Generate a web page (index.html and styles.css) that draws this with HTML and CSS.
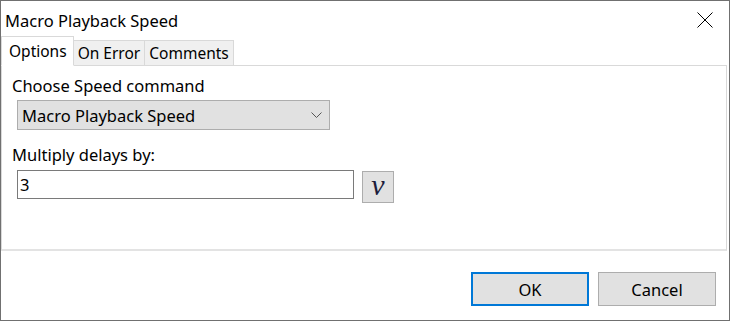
FILE: index.html
```html
<!DOCTYPE html>
<html lang="en">

<head>
    <meta charset="UTF-8">
    <title>Macro Playback Speed</title>
    <link rel="stylesheet" href="styles.css">
</head>

<body>
    <div class="window">
        <!-- Title bar -->
        <div class="titlebar">
            <span class="title">Macro Playback Speed</span>
            <span class="close">
                <svg width="16" height="16" viewBox="0 0 16 16">
                    <path d="M0.5 0.5 L15.5 15.5 M15.5 0.5 L0.5 15.5" stroke="#000" stroke-width="1" fill="none" />
                </svg>
            </span>
        </div>

        <!-- Tabs -->
        <div class="tabs">
            <div class="tab active">Options</div>
            <div class="tab">On Error</div>
            <div class="tab">Comments</div>
        </div>

        <div class="panel">
            <label class="field-label">Choose Speed command</label>
            <div class="select">
                <span>Macro Playback Speed</span>
                <svg class="chevron" width="11" height="6" viewBox="0 0 11 6">
                    <path d="M0.5 0.5 L5.5 5.5 L10.5 0.5" stroke="#555" stroke-width="1" fill="none" />
                </svg>
            </div>

            <label class="field-label second">Multiply delays by:</label>
            <div class="input-row">
                <div class="textbox">3</div>
                <div class="var-btn">v</div>
            </div>
        </div>

        <div class="footer">
            <div class="btn default">OK</div>
            <div class="btn">Cancel</div>
        </div>
    </div>
</body>

</html>
```

FILE: styles.css
```css
body {
    margin: 0;
    font-family: "Noto Sans", Arial, sans-serif;
    font-size: 16.5px;
    color: #000;
    background: #fff;
}

.window {
    width: 730px;
    height: 321px;
    box-sizing: border-box;
    border: 1px solid #707070;
    background: #fff;
    display: flex;
    flex-direction: column;
}

.titlebar {
    height: 36px;
    display: flex;
    align-items: center;
    justify-content: space-between;
    padding-left: 4px;
    padding-right: 16px;
}

.title {
    font-size: 16.5px;
    margin-top: 3px;
}

.close {
    display: flex;
    margin-top: 1px;
}

.tabs {
    display: flex;
    align-items: flex-end;
    height: 29px;
    margin-bottom: -1px;
    position: relative;
    z-index: 1;
}

.tab {
    height: 24px;
    line-height: 25px;
    font-size: 15.5px;
    padding: 0 4px;
    background: #f0f0f0;
    border: 1px solid #d9d9d9;
    border-left: none;
    border-bottom: 1px solid #d9d9d9;
}

.tab.active {
    height: 28px;
    line-height: 28px;
    background: #fff;
    border-left: 1px solid #d9d9d9;
    border-bottom-color: #fff;
    padding: 0 6px 0 7px;
}

.panel {
    height: 186px;
    box-sizing: border-box;
    margin-right: 2px;
    border: 1px solid #d9d9d9;
    border-bottom: 2px solid #e3e3e3;
    padding: 10px 0 0 10px;
}

.field-label {
    display: block;
    line-height: 20px;
}

.field-label.second {
    margin-top: 15px;
}

.select {
    margin: 4px 0 0 5px;
    width: 313px;
    height: 30px;
    box-sizing: border-box;
    background: #e1e1e1;
    border: 1px solid #adadad;
    display: flex;
    align-items: center;
    justify-content: space-between;
    padding: 0 7px 0 4px;
}

.input-row {
    display: flex;
    align-items: flex-start;
    gap: 8px;
    margin: 5px 0 0 5px;
}

.textbox {
    width: 337px;
    height: 29px;
    box-sizing: border-box;
    border: 1px solid #7a7a7a;
    padding: 0 2px;
    line-height: 27px;
}

.var-btn {
    width: 32px;
    height: 32px;
    box-sizing: border-box;
    margin-top: 1px;
    background: #e1e1e1;
    border: 1px solid #adadad;
    font-family: "Liberation Serif", "Times New Roman", serif;
    font-style: italic;
    font-size: 30px;
    color: #1c1c3c;
    text-align: center;
    line-height: 26px;
}

.footer {
    flex: 1;
    display: flex;
    justify-content: flex-end;
    align-items: flex-start;
    gap: 9px;
    padding: 21px 13px 0 0;
}

.btn {
    width: 118px;
    height: 34px;
    box-sizing: border-box;
    background: #e1e1e1;
    border: 1px solid #adadad;
    display: flex;
    align-items: center;
    justify-content: center;
}

.btn.default {
    border: 2px solid #0078d7;
}
```
